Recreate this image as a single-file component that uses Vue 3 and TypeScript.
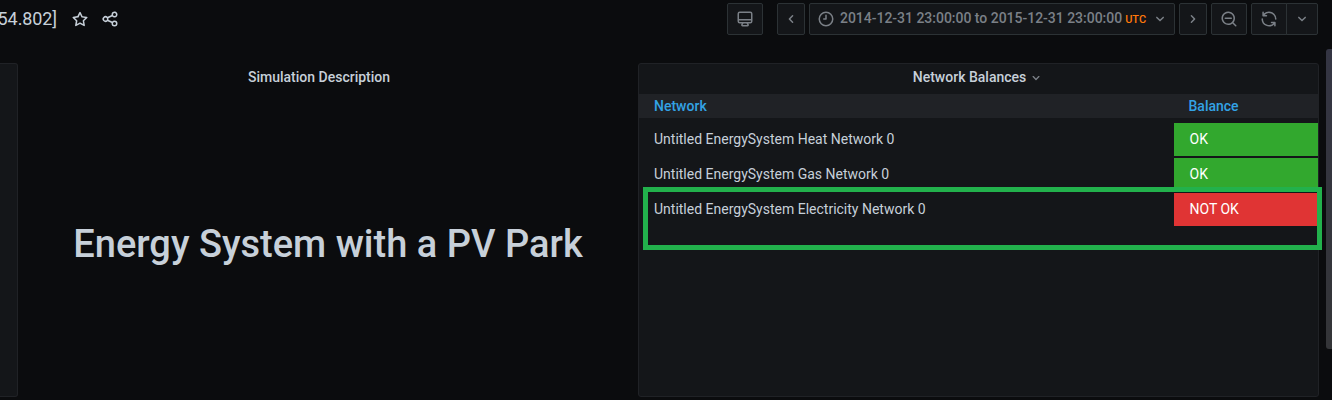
<script setup lang="ts">
interface Row {
  network: string
  ok: boolean
}

const rows: Row[] = [
  { network: 'Untitled EnergySystem Heat Network 0', ok: true },
  { network: 'Untitled EnergySystem Gas Network 0', ok: true },
  { network: 'Untitled EnergySystem Electricity Network 0', ok: false },
]

const icons = {
  star: 'M22,9.67A1,1,0,0,0,21.14,9l-5.69-.83L12.9,3a1,1,0,0,0-1.8,0L8.55,8.16,2.86,9a1,1,0,0,0-.81.68,1,1,0,0,0,.25,1l4.13,4-1,5.68A1,1,0,0,0,6.9,21.44L12,18.77l5.1,2.67a.93.93,0,0,0,.46.12,1,1,0,0,0,.59-.19,1,1,0,0,0,.4-1l-1-5.68,4.13-4A1,1,0,0,0,22,9.67Zm-6.15,4a1,1,0,0,0-.29.88l.72,4.2-3.76-2a1.06,1.06,0,0,0-.94,0l-3.76,2,.72-4.2a1,1,0,0,0-.29-.88l-3-3,4.21-.61a1,1,0,0,0,.76-.55L12,5.7l1.88,3.82a1,1,0,0,0,.76.55l4.21.61Z',
  share: 'M18,14a4,4,0,0,0-3.08,1.48l-5.1-2.35a3.64,3.64,0,0,0,0-2.26l5.1-2.35A4,4,0,1,0,14,6a4.17,4.17,0,0,0,.07.71L8.79,9.14a4,4,0,1,0,0,5.72l5.28,2.43A4.17,4.17,0,0,0,14,18a4,4,0,1,0,4-4ZM18,4a2,2,0,1,1-2,2A2,2,0,0,1,18,4ZM6,14a2,2,0,1,1,2-2A2,2,0,0,1,6,14Zm12,6a2,2,0,1,1,2-2A2,2,0,0,1,18,20Z',
  monitor: 'M19,2H5A3,3,0,0,0,2,5V15a3,3,0,0,0,3,3H7.64l-.58,1a2,2,0,0,0,0,2,2,2,0,0,0,1.75,1h6.46A2,2,0,0,0,17,21a2,2,0,0,0,0-2l-.59-1H19a3,3,0,0,0,3-3V5A3,3,0,0,0,19,2ZM8.77,20,10,18H14l1.2,2ZM20,15a1,1,0,0,1-1,1H5a1,1,0,0,1-1-1V14H20Zm0-3H4V5A1,1,0,0,1,5,4H19a1,1,0,0,1,1,1Z',
  clock: 'M12,2A10,10,0,1,0,22,12,10,10,0,0,0,12,2Zm0,18a8,8,0,1,1,8-8A8,8,0,0,1,12,20ZM12,6a1,1,0,0,0-1,1v4H9a1,1,0,0,0,0,2h3a1,1,0,0,0,1-1V7A1,1,0,0,0,12,6Z',
  zoomOut: 'M21.71,20.29,18,16.61A9,9,0,1,0,16.61,18l3.68,3.68a1,1,0,0,0,1.42,0A1,1,0,0,0,21.71,20.29ZM11,18a7,7,0,1,1,7-7A7,7,0,0,1,11,18Zm4-8H7a1,1,0,0,0,0,2h8a1,1,0,0,0,0-2Z',
  sync: 'M19.91,15.51H15.38a1,1,0,0,0,0,2h2.4A8,8,0,0,1,4,12a1,1,0,1,0-2,0,10,10,0,0,0,16.88,7.23V21a1,1,0,0,0,2,0V16.5A1,1,0,0,0,19.91,15.51ZM12,2A10,10,0,0,0,5.12,4.77V3a1,1,0,0,0-2,0V7.5a1,1,0,0,0,1,1h4.5a1,1,0,0,0,0-2H6.22A8,8,0,0,1,20,12a1,1,0,0,0,2,0A10,10,0,0,0,12,2Z',
  angle: 'M17,9.17a1,1,0,0,0-1.41,0L12,12.71,8.46,9.17a1,1,0,0,0-1.41,0,1,1,0,0,0,0,1.42l4.24,4.24a1,1,0,0,0,1.42,0L17,10.59A1,1,0,0,0,17,9.17Z',
}
</script>

<template>
  <div class="dashboard">
    <header class="navbar">
      <div class="title">54.802]</div>
      <svg class="icon bright star" viewBox="0 0 24 24"><path :d="icons.star" /></svg>
      <svg class="icon bright share" viewBox="0 0 24 24"><path :d="icons.share" /></svg>
      <div class="toolbar">
        <button class="btn kiosk"><svg class="icon" viewBox="0 0 24 24"><path :d="icons.monitor" /></svg></button>
        <button class="btn step"><svg class="icon left" viewBox="0 0 24 24"><path :d="icons.angle" /></svg></button>
        <button class="btn range">
          <svg class="icon" viewBox="0 0 24 24"><path :d="icons.clock" /></svg>
          <span class="range-text">2014-12-31 23:00:00 to 2015-12-31 23:00:00</span>
          <span class="utc">UTC</span>
          <svg class="icon caret" viewBox="0 0 24 24"><path :d="icons.angle" /></svg>
        </button>
        <button class="btn step"><svg class="icon right" viewBox="0 0 24 24"><path :d="icons.angle" /></svg></button>
        <button class="btn"><svg class="icon" viewBox="0 0 24 24"><path :d="icons.zoomOut" /></svg></button>
        <div class="group">
          <button class="btn sync"><svg class="icon" viewBox="0 0 24 24"><path :d="icons.sync" /></svg></button>
          <button class="btn interval"><svg class="icon" viewBox="0 0 24 24"><path :d="icons.angle" /></svg></button>
        </div>
      </div>
    </header>

    <main class="panels">
      <section class="panel edge"></section>
      <section class="panel description">
        <h2 class="panel-title">Simulation Description</h2>
        <div class="description-body"><h1>Energy System with a PV Park</h1></div>
      </section>
      <section class="panel balances">
        <h2 class="panel-title">
          Network Balances
          <svg class="icon menu" viewBox="0 0 24 24"><path :d="icons.angle" /></svg>
        </h2>
        <div class="table-head"><span>Network</span><span class="head-balance">Balance</span></div>
        <div class="table-body">
          <div v-for="row in rows" :key="row.network" class="row">
            <span class="name">{{ row.network }}</span>
            <span class="status" :class="{ bad: !row.ok }">{{ row.ok ? 'OK' : 'NOT OK' }}</span>
          </div>
        </div>
        <div class="highlight"></div>
      </section>
    </main>
    <div class="scroll-thumb"></div>
  </div>
</template>

<style>
html,
body {
  background: #0b0c0e;
  overflow: hidden;
}
</style>

<style scoped>
.dashboard {
  position: relative;
  width: 1332px;
  height: 400px;
  overflow: hidden;
  background: #0b0c0e;
  color: #c7d0d9;
  font-family: Roboto, "Liberation Sans", sans-serif;
  font-size: 14px;
}
.dashboard * {
  box-sizing: border-box;
}
.navbar {
  display: flex;
  align-items: center;
  height: 38px;
  margin-bottom: 25px;
  padding-right: 14px;
}
.title {
  display: flex;
  justify-content: flex-end;
  width: 58px;
  padding: 0 1px 2px 0;
  font-size: 18px;
  letter-spacing: -0.1px;
  white-space: nowrap;
}
.icon {
  display: block;
  flex: none;
  width: 18px;
  height: 18px;
  margin-bottom: 1px;
  fill: #7b8087;
}
.bright {
  margin-bottom: 0;
  fill: #c7d0d9;
}
.star {
  margin-left: 13px;
}
.share {
  margin-left: 12px;
}
.toolbar {
  display: flex;
  gap: 4px;
  margin-left: auto;
}
.btn {
  display: flex;
  align-items: center;
  justify-content: center;
  width: 36px;
  height: 32px;
  margin: 0;
  padding: 0;
  border: 1px solid #2c3235;
  border-radius: 2px;
  background: #141619;
  color: #7b8087;
  font: 500 14px Roboto, sans-serif;
  white-space: nowrap;
}
.kiosk {
  margin-right: 10px;
}
.step {
  width: 28px;
}
.range {
  justify-content: flex-start;
  width: 366px;
  padding-left: 7px;
}
.range-text {
  margin-left: 5px;
  padding-bottom: 2px;
  letter-spacing: -0.02px;
}
.utc {
  margin-left: 3px;
  color: #ff780a;
  font-size: 11px;
}
.caret {
  margin-left: 5px;
}
.left {
  transform: rotate(90deg);
}
.right {
  transform: rotate(-90deg);
}
.group {
  display: flex;
}
.sync {
  border-radius: 2px 0 0 2px;
}
.interval {
  width: 32px;
  margin-left: -1px;
  border-radius: 0 2px 2px 0;
}
.interval .icon {
  margin-bottom: 0;
}
.panels {
  display: flex;
  height: 334px;
}
.panel {
  position: relative;
  border: 1px solid #202226;
  border-radius: 3px;
  background: #141619;
}
.edge {
  width: 18px;
  border-left: 0;
  border-radius: 0 3px 3px 0;
}
.description {
  display: flex;
  flex-direction: column;
  width: 602px;
  margin: 0 9px;
  border-color: transparent;
  background: transparent;
}
.panel-title {
  display: flex;
  align-items: center;
  justify-content: center;
  height: 30px;
  margin: 0;
  padding-bottom: 4px;
  font-size: 14px;
  font-weight: 500;
}
.description .panel-title {
  padding-right: 18px;
}
.description-body {
  display: flex;
  flex: 1;
  align-items: center;
  justify-content: center;
  padding-bottom: 2px;
}
h1 {
  margin: 0;
  font-size: 38px;
  font-weight: 500;
  white-space: nowrap;
}
.balances {
  width: 681px;
}
.menu {
  width: 16px;
  height: 16px;
  margin: 1px 0 0 2px;
}
.table-head {
  display: flex;
  align-items: center;
  height: 24px;
  padding-left: 15px;
  background: #202226;
  color: #33a2e5;
  font-weight: 500;
}
.table-head span:first-child {
  width: 534.5px;
}
.table-body {
  display: flex;
  flex-direction: column;
  gap: 2px;
  padding-top: 5px;
}
.row {
  display: flex;
  align-items: center;
  height: 33px;
}
.name {
  flex: 1;
  padding: 0 0 2px 15px;
}
.status {
  display: flex;
  align-items: center;
  width: 144px;
  height: 33px;
  padding: 0 0 2px 15.5px;
  background: #32a82e;
  color: #fff;
}
.bad {
  background: #e03434;
}
.highlight {
  position: absolute;
  top: 123px;
  left: 4px;
  width: 679px;
  height: 63px;
  border: 5px solid #22b14c;
}
.scroll-thumb {
  position: absolute;
  top: 49px;
  right: 0;
  width: 6px;
  height: 300px;
  border-radius: 3px 0 0 3px;
  background: linear-gradient(#343543, #343538);
}
</style>
